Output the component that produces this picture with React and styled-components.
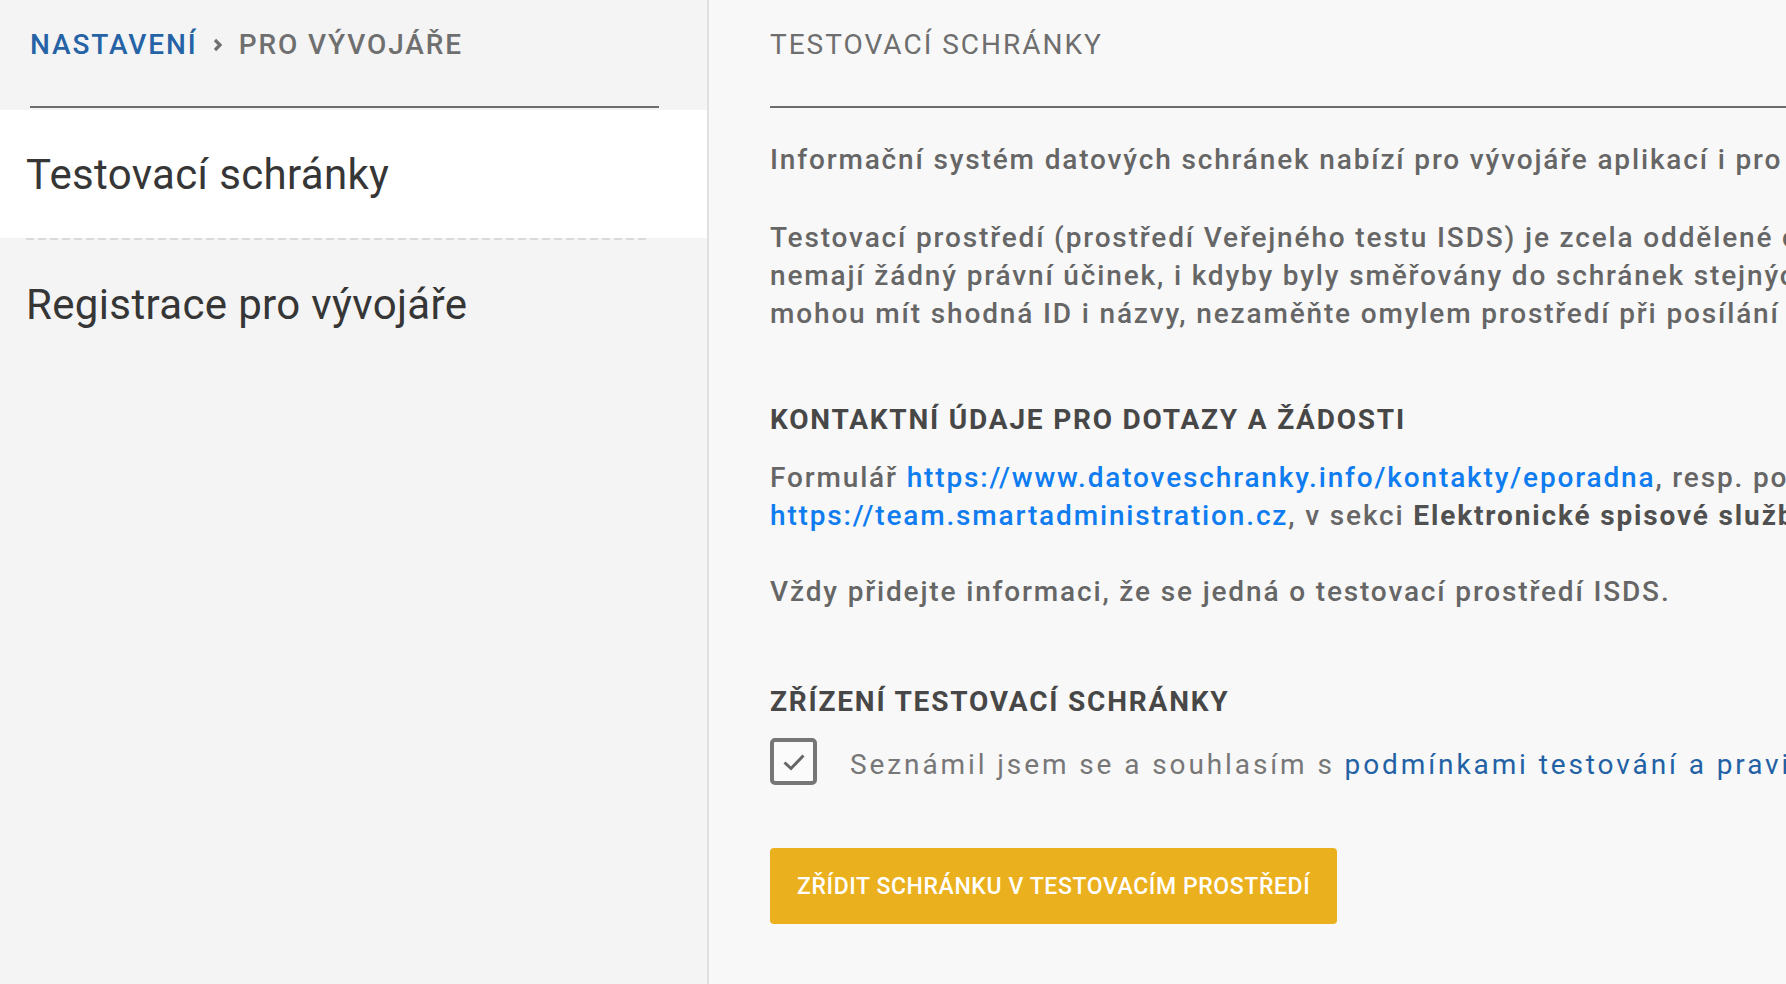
import React from 'react';
import styled, { createGlobalStyle } from 'styled-components';

const GlobalStyle = createGlobalStyle`
  html, body {
    margin: 0;
    padding: 0;
    height: 100%;
    overflow: hidden;
  }
  body {
    font-family: Roboto, "Noto Sans", "Liberation Sans", sans-serif;
    background: #f8f8f8;
  }
  #root {
    height: 100%;
  }
`;

const Page = styled.div`
  display: flex;
  width: 100vw;
  height: 100vh;
  overflow: hidden;
`;

const Sidebar = styled.aside`
  flex: 0 0 707px;
  background: #f4f4f4;
  border-right: 2px solid #e0e0e0;
  display: flex;
  flex-direction: column;
`;

const Header = styled.div`
  margin: 0 ${(p) => p.$right}px 0 ${(p) => p.$left}px;
  padding-top: 26px;
  height: 80px;
  border-bottom: 2px solid #6d6d6d;
  display: flex;
  align-items: flex-start;
`;

const Crumb = styled.span`
  font-size: 28px;
  line-height: 38px;
  font-weight: 500;
  letter-spacing: 1.9px;
  text-transform: uppercase;
  color: ${(p) => (p.$link ? '#2563a6' : '#6f6f6f')};
`;

const Chevron = styled.svg`
  width: 11px;
  height: 16px;
  margin: 11px 16px 0 14px;
  flex: none;
`;

const NavList = styled.nav`
  padding-top: 2px;
  display: flex;
  flex-direction: column;
`;

const NavItem = styled.div`
  height: 128px;
  display: flex;
  align-items: center;
  padding-left: 26px;
  background: ${(p) => (p.$active ? '#ffffff' : 'transparent')};
  font-size: 42px;
  font-weight: 400;
  letter-spacing: 0.35px;
  color: #363636;
`;

const Separator = styled.div`
  height: 2px;
  margin: 0 57px 0 26px;
  background: repeating-linear-gradient(to right, #dadada 0 8px, transparent 8px 12px);
`;

const Main = styled.main`
  flex: 1;
  min-width: 0;
  overflow: hidden;
  background: #f8f8f8;
`;

const Content = styled.div`
  width: 1800px;
  display: flex;
  flex-direction: column;
  align-items: flex-start;
`;

const Title = styled.h1`
  margin: 0;
  font-size: 28px;
  line-height: 38px;
  font-weight: 400;
  letter-spacing: 2px;
  color: #6e6e6e;
  text-transform: uppercase;
`;

const Body = styled.div`
  padding-left: 61px;
  display: flex;
  flex-direction: column;
  align-items: flex-start;
`;

const Text = styled.p`
  margin: ${(p) => p.$mt}px 0 0;
  font-size: 28px;
  line-height: 38px;
  font-weight: 500;
  letter-spacing: 1.85px;
  color: #666666;
  white-space: nowrap;
`;

const SectionTitle = styled.h2`
  margin: ${(p) => p.$mt}px 0 0;
  font-size: 28px;
  line-height: 38px;
  font-weight: 700;
  letter-spacing: 1.8px;
  color: #474747;
  text-transform: uppercase;
`;

const Link = styled.a`
  color: ${(p) => (p.$dark ? '#2361a5' : '#0f7cf0')};
  text-decoration: none;
`;

const Strong = styled.b`
  font-weight: 700;
  color: #505050;
`;

const CheckRow = styled.label`
  margin-top: 17px;
  display: flex;
  align-items: center;
  gap: 33px;
  white-space: nowrap;
`;

const Box = styled.span`
  width: 47px;
  height: 47px;
  box-sizing: border-box;
  border: 4px solid #767676;
  border-radius: 5px;
  background: #fbfbfb;
  display: flex;
  align-items: center;
  justify-content: center;
  flex: none;
`;

const CheckLabel = styled.span`
  font-size: 28px;
  line-height: 38px;
  font-weight: 400;
  letter-spacing: 2.9px;
  color: #777777;
  padding-top: 6px;
`;

const Button = styled.button`
  margin-top: 63px;
  height: 76px;
  padding: 0 27px;
  border: none;
  border-radius: 4px;
  background: #ebb01d;
  color: #ffffff;
  font-family: Roboto, "Noto Sans", sans-serif;
  font-size: 23px;
  font-weight: 500;
  letter-spacing: 0.6px;
  text-transform: uppercase;
  cursor: pointer;
`;

export default function App() {
  return (
    <>
      <GlobalStyle />
      <Page>
        <Sidebar>
          <Header $left={30} $right={48}>
            <Crumb $link>Nastavení</Crumb>
            <Chevron viewBox="0 0 11 16">
              <path d="M3 3 L8 8 L3 13" fill="none" stroke="#6f6f6f" strokeWidth="3.2" />
            </Chevron>
            <Crumb>Pro vývojáře</Crumb>
          </Header>
          <NavList>
            <NavItem $active>Testovací schránky</NavItem>
            <Separator />
            <NavItem>Registrace pro vývojáře</NavItem>
          </NavList>
        </Sidebar>
        <Main>
          <Content>
            <Header $left={61} $right={0} style={{ alignSelf: 'stretch' }}>
              <Title>Testovací schránky</Title>
            </Header>
            <Body>
              <Text $mt={33}>
                Informační systém datových schránek nabízí pro vývojáře aplikací i pro uživatele testovací prostředí.
              </Text>
              <Text $mt={40}>
                Testovací prostředí (prostředí Veřejného testu ISDS) je zcela oddělené od produkčního prostředí. Zprávy v něm odeslané
                <br />
                nemají žádný právní účinek, i kdyby byly směřovány do schránek stejných subjektů. Protože schránky v obou prostředích
                <br />
                mohou mít shodná ID i názvy, nezaměňte omylem prostředí při posílání zpráv.
              </Text>
              <SectionTitle $mt={68}>Kontaktní údaje pro dotazy a žádosti</SectionTitle>
              <Text $mt={20}>
                Formulář <Link href="#">https://www.datoveschranky.info/kontakty/eporadna</Link>, resp. portál podpory
                <br />
                <Link href="#">https://team.smartadministration.cz</Link>, v sekci <Strong>Elektronické spisové služby</Strong>.
              </Text>
              <Text $mt={38}>Vždy přidejte informaci, že se jedná o testovací prostředí ISDS.</Text>
              <SectionTitle $mt={72}>Zřízení testovací schránky</SectionTitle>
              <CheckRow>
                <Box>
                  <svg width="24" height="18" viewBox="0 0 24 18">
                    <path d="M2.5 9.5 L9 15.5 L21.5 2.5" fill="none" stroke="#666" strokeWidth="3" />
                  </svg>
                </Box>
                <CheckLabel>
                  Seznámil jsem se a souhlasím s <Link $dark href="#">podmínkami testování a pravidly používání</Link>
                </CheckLabel>
              </CheckRow>
              <Button>Zřídit schránku v testovacím prostředí</Button>
            </Body>
          </Content>
        </Main>
      </Page>
    </>
  );
}
